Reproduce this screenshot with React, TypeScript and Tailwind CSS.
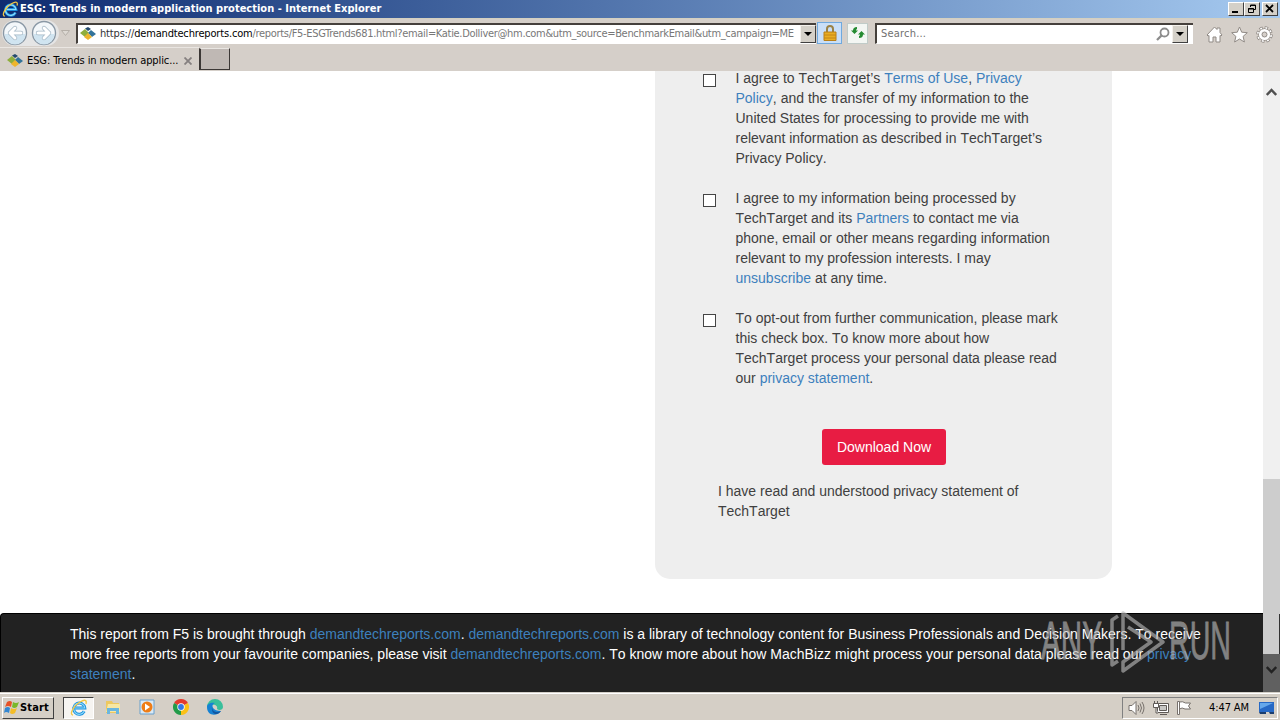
import type { ReactNode } from "react"

const A = ({ children }: { children: ReactNode }) => <span className="text-[#3d80bd]">{children}</span>

const IeLogo = ({ className }: { className?: string }) => (
  <svg viewBox="0 0 18 18" className={className} fill="none">
    <path d="M14.2 12.3A5.6 5.6 0 1 1 14.8 9H5" stroke="#1b8fdd" strokeWidth="3" />
    <path d="M14.2 12.3A5.6 5.6 0 1 1 14.8 9H5" stroke="#8fdcfb" strokeWidth="1.2" />
    <path d="M3 16C-1 16 3 7 10 3c5-3 7-2 6 2" stroke="#f3c744" strokeWidth="1.3" />
  </svg>
)

const SiteIcon = () => (
  <svg viewBox="0 0 16 14" className="h-[14px] w-4 shrink-0">
    <path d="M5 1.500l3-1.500 3 2-3 2z" fill="#244a6e" />
    <path d="M0 6l5-4 4 4-4 4z" fill="#8fae3c" />
    <path d="M11 3l5 4-4 3-4-4z" fill="#32739a" />
    <path d="M8 6l4 4-4 3-4-3z" fill="#eeb52c" />
  </svg>
)

const NavButton = ({ forward }: { forward?: boolean }) => (
  <svg viewBox="0 0 26 26" className="size-[26px]">
    <circle cx="13" cy="13" r="11.5" fill="#f3f7fa" stroke="#8a98a5" strokeWidth="1.4" />
    <path d="M2.5 14a10.5 10.5 0 0 0 21 0z" fill="#d0e4f0" />
    <g transform={forward ? "translate(26 0) scale(-1 1)" : undefined} strokeLinecap="round" strokeLinejoin="round" fill="none">
      <path d="M19 13H8m5-5l-5 5 5 5" stroke="#a3b6c4" strokeWidth="4.4" />
      <path d="M19 13H8m5-5l-5 5 5 5" stroke="#fff" strokeWidth="3" />
    </g>
  </svg>
)

const DropButton = () => (
  <span className="flex h-[18px] w-4 shrink-0 items-center justify-center border border-t-[#f4f1ec] border-r-[#404040] border-b-[#404040] border-l-[#f4f1ec] bg-[#d4d0c8]">
    <svg viewBox="0 0 8 4" className="h-1 w-2">
      <path d="M0 0h8L4 4z" />
    </svg>
  </span>
)

const CaptionButton = ({ children }: { children: ReactNode }) => (
  <span className="flex h-[14px] w-4 items-center justify-center border border-t-white border-r-[#404040] border-b-[#404040] border-l-white bg-[#d4d0c8]">
    <svg viewBox="0 0 12 10" className="h-[10px] w-3" fill="none" stroke="#000">
      {children}
    </svg>
  </span>
)

function TitleBar() {
  return (
    <header className="flex h-[18px] items-center bg-linear-to-r from-[#0f2b70] to-[#a6caf0] pr-[2px] pl-[2px] text-white">
      <IeLogo className="size-[17px]" />
      <span className="ml-[1px] pt-[1px] text-[11px] font-bold tracking-[0.01px] whitespace-nowrap">
        ESG: Trends in modern application protection - Internet Explorer
      </span>
      <div className="ml-auto flex">
        <CaptionButton>
          <path d="M2 8h6" strokeWidth="2" />
        </CaptionButton>
        <CaptionButton>
          <path d="M4.500 3V1h5v4.500H8M4 1.500h6" />
          <path d="M2.500 4.500h5v4h-5zM2 5h6" />
        </CaptionButton>
        <span className="w-[2px]" />
        <CaptionButton>
          <path d="M2 1l7 7M9 1L2 8" strokeWidth="1.8" />
        </CaptionButton>
      </div>
    </header>
  )
}

function AddressBar() {
  return (
    <div className="flex h-[29px] items-center border-t border-[#d4d0c0] bg-[#d5cfc9]">
      <div className="ml-[2px] flex w-[57px] items-center rounded-full bg-[#e5e5e5]">
        <NavButton />
        <span className="w-[3px]" />
        <NavButton forward />
      </div>
      <svg viewBox="0 0 9 6" className="ml-[2px] h-[6px] w-[9px] shrink-0">
        <path d="M.5.5h8l-4 5z" fill="#ddd9d3" stroke="#b5afa8" />
      </svg>
      <div className="ml-[6px] flex h-[21px] w-[740px] shrink-0 items-center border-t-2 border-l-2 border-[#45403c] border-b border-b-white bg-white pl-[2px]">
        <SiteIcon />
        <span className="ml-[4px] w-[697px] overflow-hidden pt-[2px] text-[11px] tracking-[-0.32px] whitespace-nowrap text-[#777]">
          <span className="tracking-[-0.17px] text-black">
            <span className="text-[#333]">https://</span>demandtechreports.com
          </span>
          /reports/F5-ESGTrends681.html?email=Katie.Dolliver@hm.com&amp;utm_source=BenchmarkEmail&amp;utm_campaign=ME
        </span>
        <span className="ml-auto">
          <DropButton />
        </span>
      </div>
      <span className="ml-[1px] flex h-[22px] w-[25px] items-center justify-center border border-[#6fa9df] bg-[#c9dff8]">
        <svg viewBox="0 0 14 16" className="h-4 w-[14px]">
          <path d="M4 8V4a3 3 0 0 1 6 0v4" fill="none" stroke="#9a8247" strokeWidth="2" />
          <path d="M1 7h12v8.5H1z" fill="#e9ad22" stroke="#b87f18" />
          <path d="M1 10h12M1 13h12" stroke="#c48617" />
        </svg>
      </span>
      <span className="ml-[5px] flex h-[21px] w-[21px] items-center justify-center border border-[#c0cbc8] bg-[#f3f6f3]">
        <svg viewBox="0 0 16 14" className="h-[14px] w-4" fill="#258b32">
          <path d="M4.500 8L1 4.500h2Q3 1 7 1v2Q6 3 6 4.500h2z" />
          <path d="M11.500 5L15 8.500h-2Q13 12 9 12v-2q1 0 1-1.500H8z" />
        </svg>
      </span>
      <div className="ml-[7px] flex h-[21px] w-[318px] items-center border-t-2 border-l-2 border-[#45403c] border-b border-b-white bg-white pr-[5px] pl-[4px]">
        <span className="pt-[2px] text-[11px] tracking-[0.2px] text-[#707070]">Search...</span>
        <svg viewBox="0 0 14 14" className="ml-auto size-[14px]" fill="none" stroke="#8c8c8c" strokeWidth="1.8">
          <circle cx="8.500" cy="5.500" r="4" />
          <path d="M5.500 8.500L1 13" strokeWidth="2.300" />
        </svg>
        <span className="ml-[2px]">
          <DropButton />
        </span>
      </div>
      <div className="mt-[3px] ml-[13px] flex gap-2">
        <svg viewBox="0 0 17 17" className="size-[17px]" fill="#fff" stroke="#918b86" strokeLinejoin="round">
          <path d="M1 9l7.500-8L11 3.500V2h3v4.500L16 9l-1 1-1-.5V16h-4v-5H7v5H3V9.500L2 10z" />
        </svg>
        <svg viewBox="0 0 17 17" className="size-[17px]" fill="#fff" stroke="#918b86" strokeLinejoin="round">
          <path d="M8.500 1l2.200 5.200 5.600.5-4.200 3.700 1.300 5.600-4.900-3-4.900 3 1.300-5.600L.7 6.700l5.600-.5z" />
        </svg>
        <svg viewBox="0 0 17 17" className="size-[17px]" fill="none">
          <circle cx="8.500" cy="8.500" r="6.800" stroke="#918b86" strokeWidth="3" strokeDasharray="3.300 2.040" />
          <circle cx="8.500" cy="8.500" r="5" fill="#fff" stroke="#918b86" strokeWidth="2.500" />
          <circle cx="8.500" cy="8.500" r="6.800" stroke="#fff" strokeWidth="1.600" strokeDasharray="1.900 3.440" strokeDashoffset="-.7" />
          <circle cx="8.500" cy="8.500" r="4.400" stroke="#fff" strokeWidth="2.400" />
          <circle cx="8.500" cy="8.500" r="2.500" fill="#d5cfc9" stroke="#918b86" />
        </svg>
      </div>
    </div>
  )
}

function TabBar() {
  return (
    <div className="flex h-6 bg-[#d5cfc9]">
      <div className="flex w-[199px] items-center border-t border-[#eae6e2] pt-[2px] pl-[7px]">
        <SiteIcon />
        <span className="ml-1 pt-[1px] text-[11px] tracking-[-0.1px] whitespace-nowrap text-black">
          ESG: Trends in modern applic...
        </span>
        <svg viewBox="0 0 8 8" className="ml-auto mr-[7px] size-2" stroke="#858080" strokeWidth="1.800">
          <path d="M.5.5l7 7M7.500.5l-7 7" />
        </svg>
      </div>
      <span className="mt-[1px] h-[22px] w-[31px] border border-t-[#e9e6e2] border-r-[#3b3735] border-b-[#3b3735] border-l-2 border-l-[#3b3735] bg-[#bfb8b4]" />
    </div>
  )
}

function Consent({ children }: { children: ReactNode }) {
  return (
    <div className="flex items-start">
      <span className="mt-[6px] size-[13px] shrink-0 border border-[#444] bg-white" />
      <p className="ml-[19.5px] whitespace-nowrap">{children}</p>
    </div>
  )
}

function Page() {
  return (
    <main className="flex h-[621px] overflow-hidden bg-white font-['Liberation_Sans',Arial,sans-serif] text-[14px] leading-5 text-[#404040] [font-kerning:none]">
      <div className="flex w-[1263px] flex-col">
        <section className="ml-[655px] flex h-[508px] w-[457px] flex-col gap-5 rounded-b-[15px] bg-[#eee] pl-12">
          <div className="-mt-[3px]">
            <Consent>
              I agree to TechTarget’s <A>Terms of Use</A>, <A>Privacy</A>
              <br />
              <A>Policy</A>, and the transfer of my information to the
              <br />
              United States for processing to provide me with
              <br />
              relevant information as described in TechTarget’s
              <br />
              Privacy Policy.
            </Consent>
          </div>
          <Consent>
            I agree to my information being processed by
            <br />
            TechTarget and its <A>Partners</A> to contact me via
            <br />
            phone, email or other means regarding information
            <br />
            relevant to my profession interests. I may
            <br />
            <A>unsubscribe</A> at any time.
          </Consent>
          <Consent>
            To opt-out from further communication, please mark
            <br />
            this check box. To know more about how
            <br />
            TechTarget process your personal data please read
            <br />
            our <A>privacy statement</A>.
          </Consent>
          <button className="mt-[21px] ml-[119px] h-[36px] w-[124px] rounded-[3px] bg-[#e81c43] text-white">Download Now</button>
          <p className="-mt-[4px] ml-[15px]">
            I have read and understood privacy statement of
            <br />
            TechTarget
          </p>
        </section>
        <footer className="mt-[34px] h-[79px] rounded-tl border-t border-l border-black bg-[#222] pt-[10px] pl-[69px] whitespace-nowrap text-white">
          This report from F5 is brought through <A>demandtechreports.com</A>. <A>demandtechreports.com</A> is a library of
          technology content for Business Professionals and Decision Makers. To receive
          <br />
          more free reports from your favourite companies, please visit <A>demandtechreports.com</A>. To know more about how
          MachBizz might process your personal data please read our <A>privacy</A>
          <br />
          <A>statement</A>.
        </footer>
      </div>
      <div className="flex w-[17px] flex-col bg-[#f0f0f0]">
        <svg viewBox="0 0 11 8" className="mt-[17px] ml-[3px] h-2 w-[11px]" fill="none" stroke="#505050" strokeWidth="2.400">
          <path d="M.8 7l4.700-5 4.700 5" />
        </svg>
        <div className="mt-[383px] flex h-[175px] items-end justify-end bg-[#cdcdcd]">
          <span className="h-[40px] w-px bg-[#333]" />
        </div>
        <div className="flex flex-1 justify-center bg-[#606060] pt-[12px]">
          <svg viewBox="0 0 11 8" className="h-2 w-[11px]" fill="none" stroke="#222" strokeWidth="2.400">
            <path d="M.8 1l4.700 5 4.700-5" />
          </svg>
        </div>
      </div>
    </main>
  )
}

function Watermark() {
  return (
    <svg viewBox="0 0 200 70" className="absolute top-[606px] left-[1036px] h-[70px] w-[200px]">
      <g
        fill="#b4b4b4"
        stroke="#b4b4b4"
        strokeWidth=".8"
        opacity=".65"
        fontFamily="Liberation Sans Narrow, Liberation Sans, sans-serif"
        fontSize="53"
      >
        <text x="5" y="53" textLength="61" lengthAdjust="spacingAndGlyphs">ANY</text>
        <text x="133" y="53" textLength="62" lengthAdjust="spacingAndGlyphs">RUN</text>
      </g>
      <g fill="none" stroke="#b4b4b4" strokeWidth="3.500" strokeLinejoin="round" opacity=".65">
        <path d="M87 44V7l40 29-40 29v-9l28-20-23-15" />
        <path d="M82 10l-6 4v45l6-4" />
      </g>
    </svg>
  )
}

function Taskbar() {
  return (
    <div className="flex h-7 items-center border-t border-[#d4d0c8] bg-[#d5cfc6] shadow-[inset_0_1px_0_#fff]">
      <button className="mt-[2px] ml-[2px] flex h-[22px] w-[52px] items-center border border-t-white border-r-[#404040] border-b-[#404040] border-l-white pl-[1px] text-[11px] font-bold">
        <svg viewBox="0 0 16 16" className="size-4">
          <path d="M3 2q3-2 5 0L7 7Q4 5 1 7z" fill="#e65227" />
          <path d="M9 2q3 2 6 0l-2 5q-3 2-5 0z" fill="#79b82a" />
          <path d="M1 8q3-2 5 0l-1 5q-3-2-5 0z" fill="#3387d2" />
          <path d="M7 8q3 2 6 0l-2 5q-3 2-5 0z" fill="#f4bd27" />
        </svg>
        <span className="pt-[1px] tracking-[0.15px]">Start</span>
      </button>
      <span className="mt-[2px] ml-[9px] flex h-[22px] w-[31px] items-center justify-center border border-t-[#404040] border-r-white border-b-white border-l-[#404040] bg-[#f6f4f1]">
        <IeLogo className="size-[18px]" />
      </span>
      <div className="ml-[11px] flex items-center gap-[18px]">
        <svg viewBox="0 0 16 16" className="size-4">
          <path d="M1 2h6l1 2h6v10H1z" fill="#edc85f" />
          <path d="M3 5h12v8H1z" fill="#f7e7a3" />
          <path d="M2 15V9h12v6h-3v-3H5v3z" fill="#6bb6df" />
        </svg>
        <svg viewBox="0 0 16 16" className="size-4">
          <path d="M1 1h14v14H1z" fill="#d9e9f6" stroke="#69a0cd" />
          <circle cx="8" cy="8" r="5.500" fill="#ee7d17" />
          <path d="M6 4.500l5 3.500-5 3.500z" fill="#fff" />
        </svg>
        <svg viewBox="0 0 16 16" className="size-4">
          <path d="M8 8L1.070 4a8 8 0 0 1 13.860 0z" fill="#e33b2e" />
          <path d="M8 8l6.930-4A8 8 0 0 1 8 16z" fill="#fbc116" />
          <path d="M8 8v8A8 8 0 0 1 1.070 4z" fill="#229b49" />
          <circle cx="8" cy="8" r="3.700" fill="#fff" />
          <circle cx="8" cy="8" r="2.900" fill="#3478e5" />
        </svg>
        <svg viewBox="0 0 16 16" className="size-4">
          <path d="M0 8a8 8 0 0 1 16 0c0 3-4 4-6 2 1-3-2-5-5-4-3 0-5 2-5 2z" fill="#39bf9b" />
          <path d="M0 8c0-3 4-5 8-4-4 1-4 8 6 8-3 5-14 6-14-4z" fill="#1682d3" />
          <path d="M5 8c0 5 5 6 9 4-3 5-10 4-9-4z" fill="#1457a0" />
        </svg>
      </div>
      <div className="mt-[2px] mr-[2px] ml-auto flex h-[22px] w-[156px] items-center border border-t-[#808080] border-r-white border-b-white border-l-[#808080] pl-[5px]">
        <svg viewBox="0 0 17 16" className="h-4 w-[17px]" fill="none" stroke="#77716c">
          <path d="M1 5.500h3l4-4v13l-4-4H1z" fill="#fff" />
          <path d="M10 5q2 3 0 6M12 3.500q3 4.500 0 9M14 2q4 6 0 12" />
        </svg>
        <svg viewBox="0 0 16 16" className="ml-[8px] size-4" fill="#fff" stroke="#5f5a56">
          <path d="M4.500 3.500h11v9h-11z" />
          <path d="M6.500 5.500h7v5h-7z" fill="#c8c7c4" />
          <path d="M7 14.500h7M.5 3.500h5v4h-5zM1.500 1v3M4.500 1v3M3 8v5h2" />
        </svg>
        <svg viewBox="0 0 17 16" className="ml-[7px] h-4 w-[17px]" fill="#fff" stroke="#77716c">
          <path d="M1.500 1.500h2v13h-2zM3.500 2q3-1 6 1h5l-2 3 2 3H9q-3-2-5.500 0z" />
        </svg>
        <span className="ml-[16px] pt-[1px] text-[11px] tracking-[-0.1px] whitespace-nowrap">4:47 AM</span>
        <svg viewBox="0 0 16 14" className="mr-[2px] ml-auto h-[14px] w-4">
          <path d="M0 1h15v10H0z" fill="#2769c5" />
          <path d="M1 2h13L1 8z" fill="#66a8eb" />
          <path d="M0 11h7v2H1zM10 11h5v2h-4z" fill="#1c3e6e" />
        </svg>
      </div>
    </div>
  )
}

export default function App() {
  return (
    <div className="relative h-[720px] w-[1280px] overflow-hidden font-['DejaVu_Sans_Condensed','DejaVu_Sans',sans-serif] text-black">
      <TitleBar />
      <AddressBar />
      <TabBar />
      <Page />
      <Taskbar />
      <Watermark />
    </div>
  )
}
